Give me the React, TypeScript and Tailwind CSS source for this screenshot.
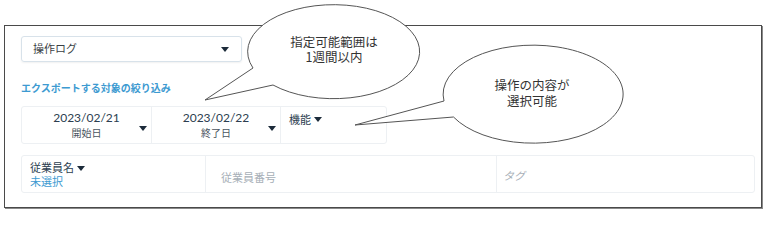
const jp = { fontFamily: 'Lato, "Noto Sans CJK JP", sans-serif' };

function Caret({ className = '' }: { className?: string }) {
  return (
    <svg width="8" height="5" viewBox="0 0 8 5" className={className}>
      <polygon points="0,0 8,0 4,5" fill="#1c2b3a" />
    </svg>
  );
}

function DateCell({ value, label, width }: { value: string; label: string; width: string }) {
  return (
    <div className={`relative flex h-full flex-col items-center justify-center ${width}`}>
      <span className="text-[12px] leading-[16px] text-[#2c3e50]">{value}</span>
      <span className="mt-[1px] text-[10px] leading-[13px] text-[#4a5560]">{label}</span>
      <Caret className="absolute right-[4px] top-[19px]" />
    </div>
  );
}

// speech bubbles drawn over the panel
function Callouts() {
  return (
    <>
      <svg
        className="pointer-events-none absolute left-0 top-0"
        width="770"
        height="215"
        viewBox="0 0 770 215"
      >
        <path
          d="M 253 68 A 86 47 0 1 1 273 85 L 205 100 Z"
          fill="#ffffff"
          stroke="#555555"
          strokeWidth="1"
        />
        <path
          d="M 444 101 A 90 49 0 1 1 453.5 117 L 355 125 Z"
          fill="#ffffff"
          stroke="#555555"
          strokeWidth="1"
        />
      </svg>
      <div
        className="absolute left-[274px] top-[34px] w-[120px] text-center text-[12.5px] leading-[15px] text-[#333333]"
        style={{ fontFamily: '"Noto Sans CJK JP", sans-serif' }}
      >
        指定可能範囲は
        <br />
        1週間以内
      </div>
      <div
        className="absolute left-[472px] top-[77px] w-[120px] text-center text-[12.5px] leading-[16px] text-[#333333]"
        style={{ fontFamily: '"Noto Sans CJK JP", sans-serif' }}
      >
        操作の内容が
        <br />
        選択可能
      </div>
    </>
  );
}

export default function App() {
  return (
    <div className="relative h-[215px] w-[770px] overflow-hidden bg-white" style={jp}>
      <div className="ml-[4px] mt-[25px] h-[183px] w-[758px] border border-[#4a4a4a] bg-white pl-[16px] pt-[10px] shadow-[1px_1px_0_#8a8a8a]">
        <div className="flex h-[26px] w-[221px] items-center justify-between rounded-[3px] border border-[#d8e2ea] pl-[11px] pr-[12px] shadow-[0_1px_2px_rgba(0,0,0,0.06)]">
          <span className="text-[11px] text-[#3a3f45]">操作ログ</span>
          <Caret />
        </div>

        <div className="mt-[19px] text-[10px] font-bold leading-[14px] text-[#3d9ad1]">
          エクスポートする対象の絞り込み
        </div>

        <div className="mt-[11px] flex h-[38px] w-[366px] rounded-[3px] border border-[#edf0f3]">
          <DateCell value="2023/02/21" label="開始日" width="w-[129px]" />
          <div className="border-l border-[#edf0f3]">
            <DateCell value="2023/02/22" label="終了日" width="w-[128px]" />
          </div>
          <div className="flex flex-1 items-start gap-[3px] border-l border-[#edf0f3] pl-[8px] pt-[5px]">
            <span className="text-[11px] leading-[16px] text-[#2c3e50]">機能</span>
            <Caret className="mt-[5px]" />
          </div>
        </div>

        <div className="mt-[11px] flex h-[38px] w-[734px] rounded-[3px] border border-[#edf0f3]">
          <div className="flex w-[183px] flex-col pl-[8px] pt-[5px]">
            <div className="flex items-center gap-[3px]">
              <span className="text-[11px] leading-[14px] text-[#2c3e50]">従業員名</span>
              <Caret />
            </div>
            <span className="text-[11px] leading-[13px] text-[#3d9ad1]">未選択</span>
          </div>
          <div className="w-[291px] border-l border-[#edf0f3] pl-[15px] pt-[8px]">
            <span className="text-[11px] leading-[14px] text-[#a7afb7]">従業員番号</span>
          </div>
          <div className="flex-1 border-l border-[#edf0f3] pl-[6px] pt-[6px]">
            <span className="text-[11px] italic leading-[14px] text-[#a7afb7]">タグ</span>
          </div>
        </div>
      </div>
      <Callouts />
    </div>
  );
}
